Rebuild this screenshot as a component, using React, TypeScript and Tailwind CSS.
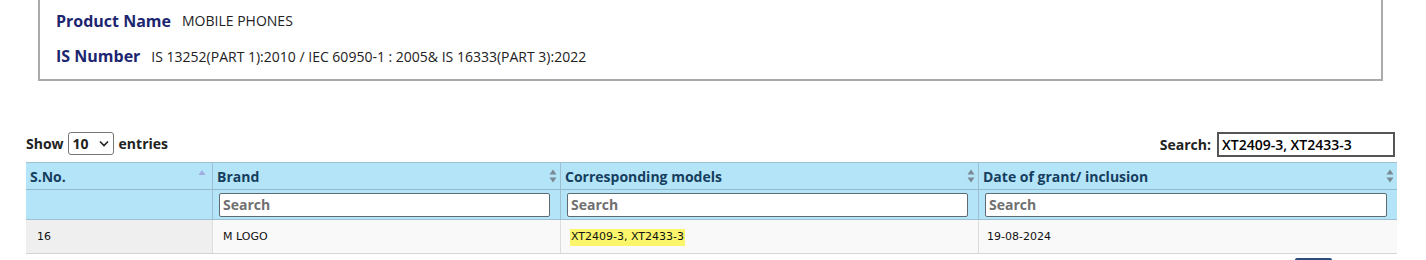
import React from "react";

const OPEN = { fontFamily: '"Open Sans", "Liberation Sans", sans-serif' };
const DEJA = { fontFamily: '"DejaVu Sans", Verdana, sans-serif' };

function SortBoth() {
  return (
    <svg width="8" height="14" viewBox="0 0 8 14" className="shrink-0">
      <path d="M4 0.5 L7.5 5.5 L0.5 5.5 Z" fill="#7a8a94" />
      <path d="M4 13.5 L7.5 8.5 L0.5 8.5 Z" fill="#7a8a94" />
    </svg>
  );
}

function SortUp() {
  return (
    <svg width="8" height="14" viewBox="0 0 8 14" className="shrink-0 mr-[3px]">
      <path d="M4 1 L7.5 6 L0.5 6 Z" fill="#a2aae0" />
    </svg>
  );
}

const cols = [
  { w: "w-[186px]", title: "S.No.", sort: "up" },
  { w: "w-[348px]", title: "Brand", sort: "both" },
  { w: "w-[418px]", title: "Corresponding models", sort: "both" },
  { w: "w-[419px]", title: "Date of grant/ inclusion", sort: "both" },
];

export default function App() {
  return (
    <div className="w-[1426px] h-[260px] overflow-hidden bg-white" style={OPEN}>
      {/* Product info box */}
      <div className="ml-[38px] w-[1345px] h-[81px] border-x-2 border-b-2 border-[#aaaaaa] pl-[16px] flex flex-col">
        <div className="h-[40px] flex items-center gap-[11px] pt-[1px]">
          <span className="text-[16px] font-bold text-[#1c2670]">Product Name</span>
          <span className="text-[14px] text-[#222]">MOBILE PHONES</span>
        </div>
        <div className="h-[32px] flex items-center gap-[11px]">
          <span className="text-[16px] font-bold text-[#1c2670]">IS Number</span>
          <span className="text-[14px] text-[#222]">
            IS 13252(PART 1):2010 / IEC 60950-1 : 2005&amp; IS 16333(PART 3):2022
          </span>
        </div>
      </div>

      <div className="ml-[26px] w-[1371px] mt-[50px]">
        {/* Controls */}
        <div className="h-[26px] flex items-center justify-between">
          <div className="flex items-center text-[14px] font-bold text-[#222] -mt-[2px]">
            <span>Show</span>
            <div className="ml-[4px] mr-[5px] w-[46px] h-[23px] border border-[#767676] rounded-[3px] flex items-center justify-between px-[4px] bg-white">
              <span className="text-[14px] font-bold">10</span>
              <svg width="10" height="7" viewBox="0 0 10 7">
                <path d="M1 1.5 L5 5.5 L9 1.5" stroke="#222" strokeWidth="1.6" fill="none" />
              </svg>
            </div>
            <span>entries</span>
          </div>
          <div className="flex items-center text-[14px] font-bold text-[#222] mr-[2px]">
            <span className="mr-[6px]">Search:</span>
            <div className="w-[178px] h-[25px] border-2 border-[#555] flex items-center px-[3px]">
              <span className="text-[14px] font-semibold text-black">XT2409-3, XT2433-3</span>
            </div>
          </div>
        </div>

        {/* Table */}
        <div className="mt-[5px] border-t border-[#9dbfd0]">
          <div className="flex bg-[#b3e4f8]">
            {cols.map((c, i) => (
              <div
                key={i}
                className={`${c.w} h-[27px] flex items-center justify-between pl-[4px] pr-[3px] border-b border-[#94b9cc] ${i > 0 ? "border-l border-l-[#9dbfd0]" : ""}`}
              >
                <span className="text-[14px] font-bold text-[#163e5e]">{c.title}</span>
                {c.sort === "up" ? <SortUp /> : <SortBoth />}
              </div>
            ))}
          </div>
          <div className="flex bg-[#b3e4f8] border-b border-[#9dbfd0]">
            {cols.map((c, i) => (
              <div
                key={i}
                className={`${c.w} h-[29px] flex items-center pl-[6px] ${i > 0 ? "border-l border-[#9dbfd0]" : ""}`}
              >
                {i > 0 && (
                  <div className="h-[24px] flex-1 mr-[10px] bg-white border border-[#5f6b73] rounded-[2px] flex items-center px-[3px]">
                    <span className="text-[14px] font-bold text-[#707070]">Search</span>
                  </div>
                )}
              </div>
            ))}
          </div>
          <div className="flex border-b border-[#d4d4d4] text-[11px] text-[#111]" style={DEJA}>
            <div className="w-[186px] h-[33px] flex items-center pl-[11px] pt-[2px] bg-[#efefef]">16</div>
            <div className="w-[348px] h-[33px] flex items-center pl-[10px] pt-[2px] bg-[#f9f9f9] border-l border-[#dddddd]">M LOGO</div>
            <div className="w-[418px] h-[33px] flex items-center pl-[9px] pt-[2px] bg-[#f9f9f9] border-l border-[#dddddd]">
              <span className="bg-[#faf56a] px-[1px]">XT2409-3, XT2433-3</span>
            </div>
            <div className="w-[419px] h-[33px] flex items-center pl-[8px] pt-[2px] bg-[#f9f9f9] border-l border-[#dddddd]">19-08-2024</div>
          </div>
        </div>

        {/* Pagination */}
        <div className="flex justify-end pr-[65px] mt-[4px]">
          <div className="w-[37px] h-[20px] bg-[#2c4d7b] rounded-t-[2px]" />
        </div>
      </div>
    </div>
  );
}
